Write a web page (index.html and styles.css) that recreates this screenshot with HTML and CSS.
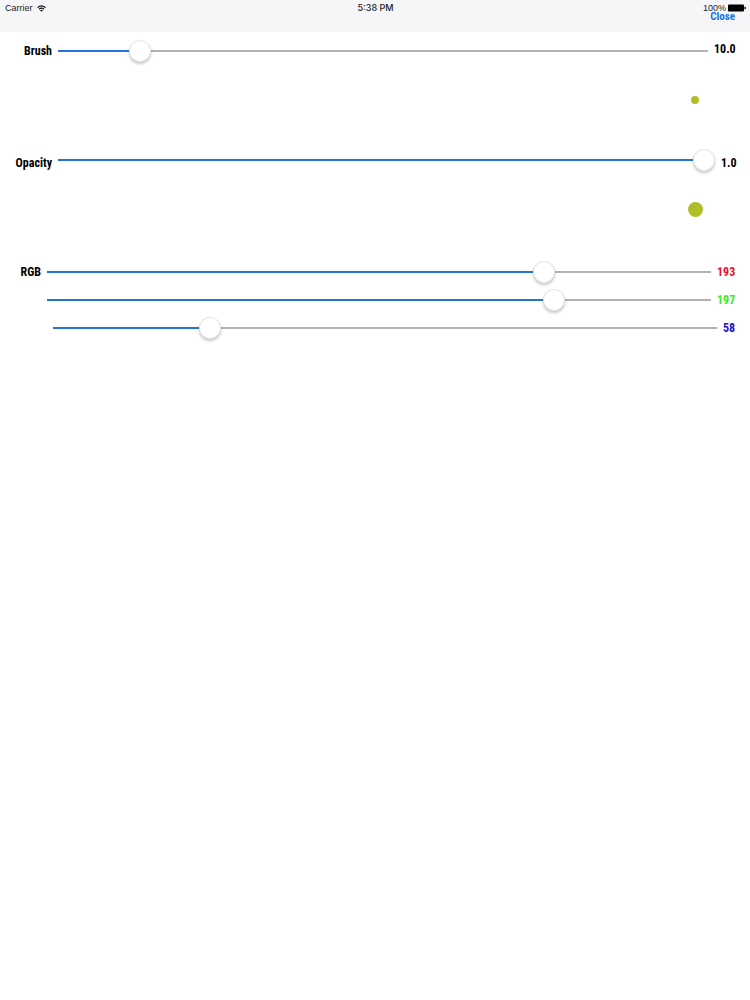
FILE: index.html
```html
<!DOCTYPE html>
<html lang="en">
<head>
<meta charset="utf-8">
<meta name="viewport" content="width=device-width, initial-scale=1">
<title>Brush settings</title>
<link rel="stylesheet" href="styles.css">
</head>
<body>
<header class="topbar">
  <div class="status">
    <div class="status-left">
      <span>Carrier</span>
      <svg class="wifi" viewBox="0 0 18 14" aria-hidden="true">
        <g fill="none" stroke="#161616" stroke-width="2.3">
          <path d="M1 5.2Q9-1.8 17 5.2"/>
          <path d="M4 8.4Q9 4.2 14 8.4"/>
        </g>
        <path d="M9 13.5L6 10.4Q9 8.2 12 10.4Z" fill="#161616"/>
      </svg>
    </div>
    <span class="clock">5:38 PM</span>
    <div class="status-right">
      <span>100%</span>
      <svg class="battery" viewBox="0 0 18 8" aria-hidden="true">
        <rect x="0" y="0.5" width="16" height="7" rx="1" fill="#000"/>
        <path d="M16.5 2.5Q18 2.8 18 4T16.500 5.500Z" fill="#000"/>
      </svg>
    </div>
  </div>
  <button class="close" type="button">Close</button>
</header>
<main class="settings">
  <section class="group">
    <div class="row row-brush">
      <label class="label" for="brush">Brush</label>
      <input class="slider" id="brush" type="range" min="0" max="89" step="any" value="10" style="--level:0.1124">
      <output class="value" for="brush">10.0</output>
    </div>
    <div class="preview"><span class="dot dot-small"></span></div>
  </section>
  <section class="group">
    <div class="row row-opacity">
      <label class="label" for="opacity">Opacity</label>
      <input class="slider" id="opacity" type="range" min="0" max="1" step="any" value="1" style="--level:1">
      <output class="value value-short" for="opacity">1.0</output>
    </div>
    <div class="preview"><span class="dot dot-large"></span></div>
  </section>
  <section class="channels">
    <div class="row">
      <label class="label label-rgb" for="red">RGB</label>
      <input class="slider" id="red" type="range" min="0" max="255" value="193" style="--level:0.7569">
      <output class="value value-red" for="red">193</output>
    </div>
    <div class="row row-green">
      <input class="slider" id="green" type="range" min="0" max="255" value="197" aria-label="Green" style="--level:0.7725">
      <output class="value value-green" for="green">197</output>
    </div>
    <div class="row row-blue">
      <input class="slider" id="blue" type="range" min="0" max="255" value="58" aria-label="Blue" style="--level:0.2275">
      <output class="value value-blue" for="blue">58</output>
    </div>
  </section>
</main>
</body>
</html>
```
FILE: styles.css
```css
* {
  box-sizing: border-box;
}

body {
  margin: 0;
  background: #fff;
  color: #000;
  font-family: "Liberation Sans Narrow", "Roboto Condensed", Roboto, sans-serif;
  font-size: 12px;
  font-weight: 700;
  line-height: 16px;
}

.topbar {
  display: flex;
  flex-direction: column;
  height: 32px;
  background: #f6f5f8;
}

.status {
  display: grid;
  grid-template-columns: 1fr auto 1fr;
  padding: 3px 4px 0 5px;
  color: #222;
  font-family: "Liberation Sans", sans-serif;
  font-size: 9px;
  font-weight: 400;
  line-height: 10px;
}

.status-left,
.status-right {
  display: flex;
  align-items: center;
  gap: 4px;
}

.status-right {
  justify-content: flex-end;
  gap: 2px;
}

.clock {
  font-family: Inter, "Liberation Sans", sans-serif;
  font-weight: 500;
}

.wifi {
  width: 9px;
  height: 7px;
}

.battery {
  width: 18px;
  height: 8px;
}

.close {
  align-self: flex-end;
  margin: -1px 15px 0 0;
  padding: 0;
  border: 0;
  background: none;
  color: #1272ee;
  font: inherit;
  font-size: 11px;
  line-height: 10px;
}

.settings {
  padding: 8px 15px;
}

.group {
  height: 109px;
}

.row {
  display: flex;
  align-items: center;
  gap: 6px;
  height: 22px;
}

.label {
  width: 37px;
  text-align: right;
}

.label-rgb {
  width: 26px;
}

.value {
  width: 21px;
  text-align: right;
}

.row-brush .value {
  padding-bottom: 5px;
}

.row-opacity .label,
.row-opacity .value {
  padding-top: 5px;
}

.value-short {
  width: 14px;
}

.value-red,
.value-green {
  width: 18px;
}

.value-blue {
  width: 12px;
}

.value-red {
  color: #e8132b;
}

.value-green {
  color: #3bea24;
}

.value-blue {
  color: #1c13cf;
}

.channels {
  display: flex;
  flex-direction: column;
  gap: 6px;
  padding-top: 3px;
}

.row-green {
  padding-left: 32px;
}

.row-blue {
  padding-left: 38px;
}

.slider {
  --fill: calc(11px + (100% - 22px) * var(--level));
  flex: 1;
  min-width: 0;
  height: 22px;
  margin: 0;
  appearance: none;
  background: linear-gradient(to right, #2474d4 var(--fill), #b3b1b4 var(--fill)) center / 100% 2px no-repeat;
}

.slider::-webkit-slider-thumb {
  appearance: none;
  width: 22px;
  height: 22px;
  border: 1px solid #e4e4e6;
  border-radius: 50%;
  background: #fff;
  box-shadow: 0 2px 3px rgba(0, 0, 0, 0.22);
}

.slider::-moz-range-thumb {
  width: 22px;
  height: 22px;
  border: 1px solid #e4e4e6;
  border-radius: 50%;
  background: #fff;
  box-shadow: 0 2px 3px rgba(0, 0, 0, 0.22);
}

.preview {
  display: flex;
  align-items: center;
  justify-content: center;
  width: 80px;
  height: 76px;
  margin-left: auto;
}

.dot {
  border-radius: 50%;
  background: #b0bd2b;
}

.dot-small {
  width: 8px;
  height: 8px;
}

.dot-large {
  width: 15px;
  height: 15px;
}
```
